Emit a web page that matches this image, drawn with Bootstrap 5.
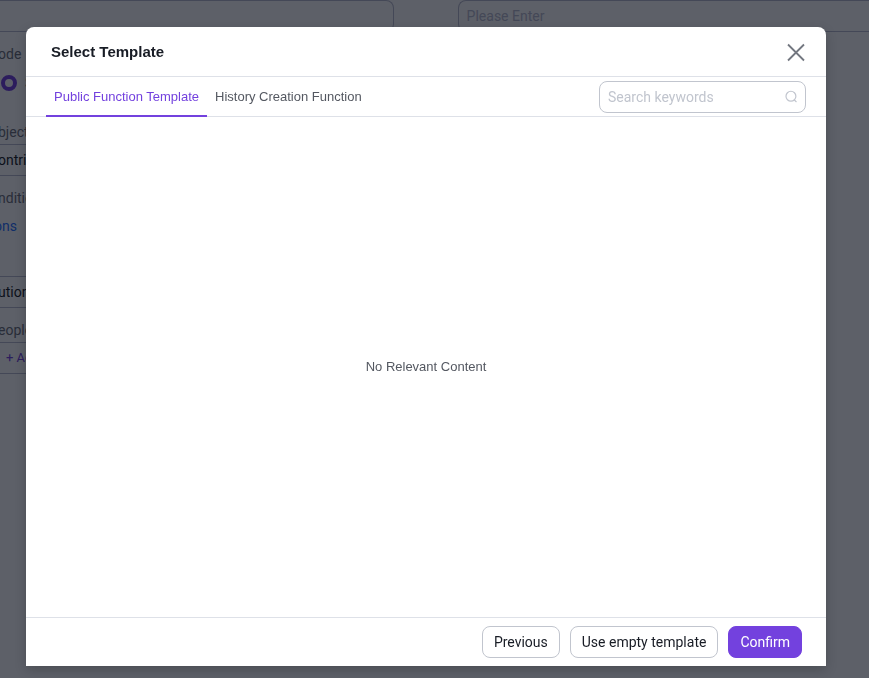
<!DOCTYPE html>
<html lang="en">
<head>
  <meta charset="UTF-8" />
  <meta name="viewport" content="width=device-width, initial-scale=1.0">
  <title>Select Template</title>
  <link href="https://cdn.jsdelivr.net/npm/bootstrap@5.3.0/dist/css/bootstrap.min.css" rel="stylesheet">
  <style>
    body {
      font-family: "Liberation Sans", Arial, sans-serif;
      font-size: 14px;
      line-height: 20px;
      color: #181c25;
      overflow: hidden;
    }
    .ui-text { font-family: Roboto, Tahoma, sans-serif; }

    /* form behind the dialog */
    .page-form label, .page-form .field-label { color: #6b6e78; display: block; }
    .page-field {
      height: 32px;
      padding: 0 8px;
      font-size: 14px;
      border: 1px solid #b8bacd;
      border-radius: 8px;
      color: #181c25;
    }
    .page-field::placeholder { color: #b8bacd; opacity: 1; }
    .first-field { flex: 393 1 0; }
    .second-field { flex: 403 1 0; }
    .field-gap { gap: 64px; }
    .form-column { width: 45%; margin-left: -2px; }
    .cut-left { border-left: 0; border-top-left-radius: 0; border-bottom-left-radius: 0; padding-left: 0; }
    .cut-right { border-right: 0; border-top-right-radius: 0; border-bottom-right-radius: 0; }
    .mode-row { margin: 9px 0 29px; }
    .page-form .mode-radio {
      appearance: none;
      width: 16px;
      height: 16px;
      margin: 0 8px 0 3px;
      border: 4px solid #7341de;
      border-radius: 50%;
      background: #fff;
    }
    .label-tight { padding-bottom: 2px; }
    .conditions-link { color: #1f6fff; text-decoration: none; margin: 8px 0 40px -4px; }
    .add-people { color: #7341de; font-size: 13px; text-align: left; background: #fff; }

    /* dialog */
    .shade { background: rgba(6, 10, 23, .65); }
    .template-modal { padding-right: 17px; overflow: hidden; }
    .template-modal .modal-dialog { max-width: 800px; margin: 27px auto 12px; }
    .template-modal .modal-content {
      min-height: calc(100vh - 39px);
      border: 0;
      border-radius: 8px 8px 0 0;
      box-shadow: 0 4px 12px rgba(0, 0, 0, .2);
    }
    .template-modal .modal-header {
      height: 50px;
      padding: 0 20px 0 25px;
      border-color: #dee1e8;
    }
    .template-modal .modal-title { font-size: 15px; font-weight: 700; line-height: 20px; }
    .close-btn { border: 0; background: none; padding: 0; width: 20px; height: 20px; line-height: 0; }
    .tab-bar { height: 40px; padding: 0 20px; border-bottom: 1px solid #dee1e8; }
    .tab-bar .tab-btn {
      height: 40px;
      padding: 2px 8px 0;
      border: 0;
      border-bottom: 2px solid transparent;
      background: none;
      font-size: 13px;
      color: #545861;
    }
    .tab-bar .tab-btn.active { color: #7341de; border-bottom-color: #7341de; }
    .search-box { width: 207px; height: 32px; border: 1px solid #c1c5ce; border-radius: 8px; padding: 0 7px 0 8px; }
    .search-box input { min-width: 0; border: 0; outline: 0; padding: 0; background: none; font-size: 14px; }
    .search-box input::placeholder { color: #c1c5ce; opacity: 1; }
    .empty-note { font-size: 13px; color: #545861; }
    .template-modal .modal-footer { height: 49px; padding: 0 24px; gap: 10px; border-color: #dee1e8; border-radius: 0; }
    .template-modal .modal-footer > * { margin: 0; }
    .foot-btn {
      height: 32px;
      padding: 0 11px;
      font-size: 14px;
      line-height: 20px;
      border: 1px solid #c1c5ce;
      border-radius: 8px;
      background: #fff;
      color: #181c25;
    }
    .foot-btn.confirm { background: #7341de; border-color: #7341de; color: #fff; }
  </style>
</head>
<body>

<form class="page-form ui-text">
  <div class="d-flex field-gap">
    <input type="text" class="page-field cut-left first-field" aria-label="Name">
    <input type="text" class="page-field cut-right second-field" aria-label="Description" placeholder="Please Enter">
  </div>

  <div class="form-column">
    <div class="field-label mt-2 pt-1">ode</div>
    <div class="mode-row d-flex align-items-center">
      <input type="radio" class="mode-radio" id="mode" checked>
      <label for="mode">S</label>
    </div>

    <label for="object" class="label-tight">bject</label>
    <input type="text" id="object" class="page-field cut-left cut-right w-100 d-block" value="ontri">

    <div class="field-label mt-2 pt-1">nditio</div>
    <a href="#" class="conditions-link d-block">ons</a>

    <input type="text" class="page-field cut-left cut-right w-100 d-block" aria-label="Function" value="ution">

    <div class="field-label label-tight mt-2 pt-1">eople</div>
    <button type="button" class="page-field add-people cut-left cut-right w-100 d-block ps-2">+ Add</button>
  </div>
</form>

<div class="modal-backdrop shade"></div>

<div class="modal d-block template-modal" role="dialog" aria-labelledby="modalTitle">
  <div class="modal-dialog">
    <div class="modal-content">
      <div class="modal-header">
        <h5 class="modal-title" id="modalTitle">Select Template</h5>
        <button type="button" class="close-btn" aria-label="Close">
          <svg width="20" height="20" viewBox="0 0 20 20" fill="none" stroke="#737780" stroke-width="1.8"><path d="M2 2.5 18 18.5M18 2.5 2 18.5"/></svg>
        </button>
      </div>

      <div class="tab-bar d-flex align-items-start justify-content-between">
        <div class="d-flex" role="tablist">
          <button type="button" class="tab-btn active" role="tab" aria-selected="true">Public Function Template</button>
          <button type="button" class="tab-btn" role="tab" aria-selected="false">History Creation Function</button>
        </div>
        <div class="search-box d-flex align-items-center mt-1">
          <input type="text" class="flex-grow-1 ui-text" placeholder="Search keywords" aria-label="Search keywords">
          <svg width="14" height="14" viewBox="0 0 14 14" fill="none" stroke="#c1c5ce" stroke-width="1.2"><circle cx="7" cy="6.2" r="5"/><path d="M10.2 9.8 12.6 12"/></svg>
        </div>
      </div>

      <div class="modal-body d-flex align-items-center justify-content-center">
        <span class="empty-note">No Relevant Content</span>
      </div>

      <div class="modal-footer ui-text">
        <button type="button" class="foot-btn">Previous</button>
        <button type="button" class="foot-btn">Use empty template</button>
        <button type="button" class="foot-btn confirm">Confirm</button>
      </div>
    </div>
  </div>
</div>

<script src="https://cdn.jsdelivr.net/npm/bootstrap@5.3.0/dist/js/bootstrap.bundle.min.js"></script>
<script>
  // switch the highlighted tab
  document.querySelectorAll(".tab-btn").forEach(function (btn) {
    btn.addEventListener("click", function () {
      document.querySelectorAll(".tab-btn").forEach(function (b) {
        b.classList.toggle("active", b === btn);
        b.setAttribute("aria-selected", b === btn);
      });
    });
  });
</script>
</body>
</html>
